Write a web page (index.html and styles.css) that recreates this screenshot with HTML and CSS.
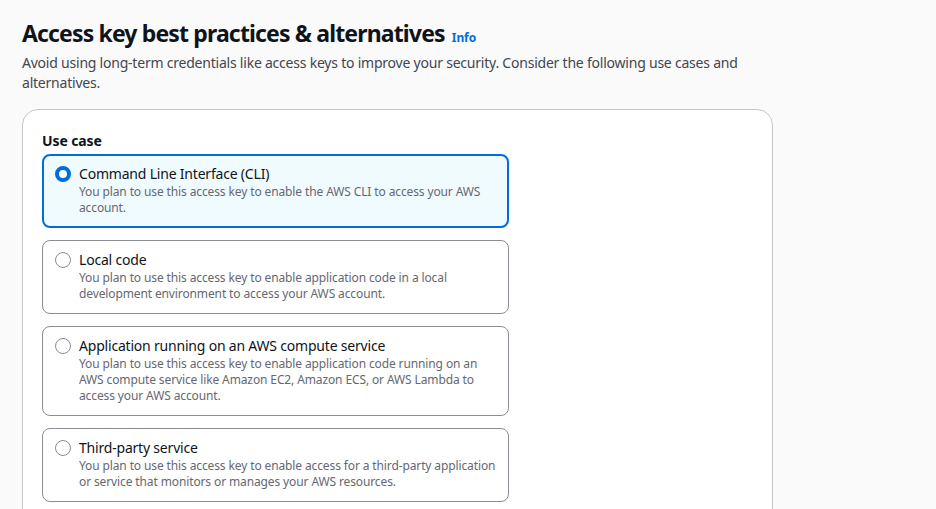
FILE: index.html
```html
<!DOCTYPE html>
<html>
<head>
<meta charset="utf-8">
<link rel="stylesheet" href="styles.css">
</head>
<body>
<div class="page">
  <header class="head">
    <h1 class="title">Access key best practices &amp; alternatives <a class="info" href="#">Info</a></h1>
    <p class="desc">Avoid using long-term credentials like access keys to improve your security. Consider the following use cases and alternatives.</p>
  </header>
  <section class="card">
    <div class="label">Use case</div>
    <div class="tiles">
      <div class="tile selected">
        <span class="radio on"></span>
        <div class="tile-body">
          <div class="tile-title">Command Line Interface (CLI)</div>
          <div class="tile-desc">You plan to use this access key to enable the AWS CLI to access your AWS account.</div>
        </div>
      </div>
      <div class="tile">
        <span class="radio"></span>
        <div class="tile-body">
          <div class="tile-title">Local code</div>
          <div class="tile-desc">You plan to use this access key to enable application code in a local development environment to access your AWS account.</div>
        </div>
      </div>
      <div class="tile">
        <span class="radio"></span>
        <div class="tile-body">
          <div class="tile-title">Application running on an AWS compute service</div>
          <div class="tile-desc">You plan to use this access key to enable application code running on an AWS compute service like Amazon EC2, Amazon ECS, or AWS Lambda to access your AWS account.</div>
        </div>
      </div>
      <div class="tile">
        <span class="radio"></span>
        <div class="tile-body">
          <div class="tile-title">Third-party service</div>
          <div class="tile-desc">You plan to use this access key to enable access for a third-party application or service that monitors or manages your AWS resources.</div>
        </div>
      </div>
    </div>
  </section>
</div>
</body>
</html>
```
FILE: styles.css
```css
html, body {
  margin: 0;
  padding: 0;
  background: #fafafa;
  font-family: "Noto Sans", "Open Sans", Arial, sans-serif;
  color: #0f141a;
  overflow: hidden;
}
.page {
  padding: 18px 0 0 22px;
  width: 751px;
}
.head {
  margin-bottom: 16px;
}
.title {
  margin: 0;
  font-size: 23px;
  line-height: 30px;
  font-weight: 700;
  color: #0f141a;
  letter-spacing: -0.85px;
}
.info {
  font-size: 12px;
  font-weight: 700;
  color: #006ce0;
  text-decoration: none;
  margin-left: 2px;
  letter-spacing: -0.1px;
}
.desc {
  margin: 0;
  font-size: 14px;
  line-height: 20px;
  color: #424650;
  letter-spacing: -0.22px;
}
.card {
  background: #ffffff;
  border: 1px solid #c6c6cd;
  border-radius: 16px;
  padding: 20px 19px 40px;
  height: 500px;
}
.label {
  font-size: 14px;
  line-height: 22px;
  font-weight: 700;
  margin-bottom: 2px;
  letter-spacing: -0.1px;
}
.tiles {
  display: flex;
  flex-direction: column;
  gap: 12px;
  width: 467px;
}
.tile {
  display: flex;
  gap: 8px;
  border: 1px solid #8c8c94;
  border-radius: 8px;
  padding: 9px 6px 11px 12px;
  background: #fff;
}
.tile.selected {
  border: 2px solid #006ce0;
  background: #f0fbff;
  padding: 8px 5px 10px 11px;
}
.radio {
  flex: none;
  width: 14px;
  height: 14px;
  border: 1px solid #8c8c94;
  border-radius: 50%;
  margin-top: 2px;
  background: #fff;
}
.radio.on {
  width: 8px;
  height: 8px;
  border: 4px solid #006ce0;
  margin-top: 2px;
}
.tile-body {
  flex: 1;
}
.tile-title {
  font-size: 14px;
  line-height: 20px;
  color: #0f141a;
  letter-spacing: -0.2px;
}
.tile-desc {
  font-size: 12px;
  line-height: 16px;
  color: #656871;
  letter-spacing: -0.12px;
}
```
